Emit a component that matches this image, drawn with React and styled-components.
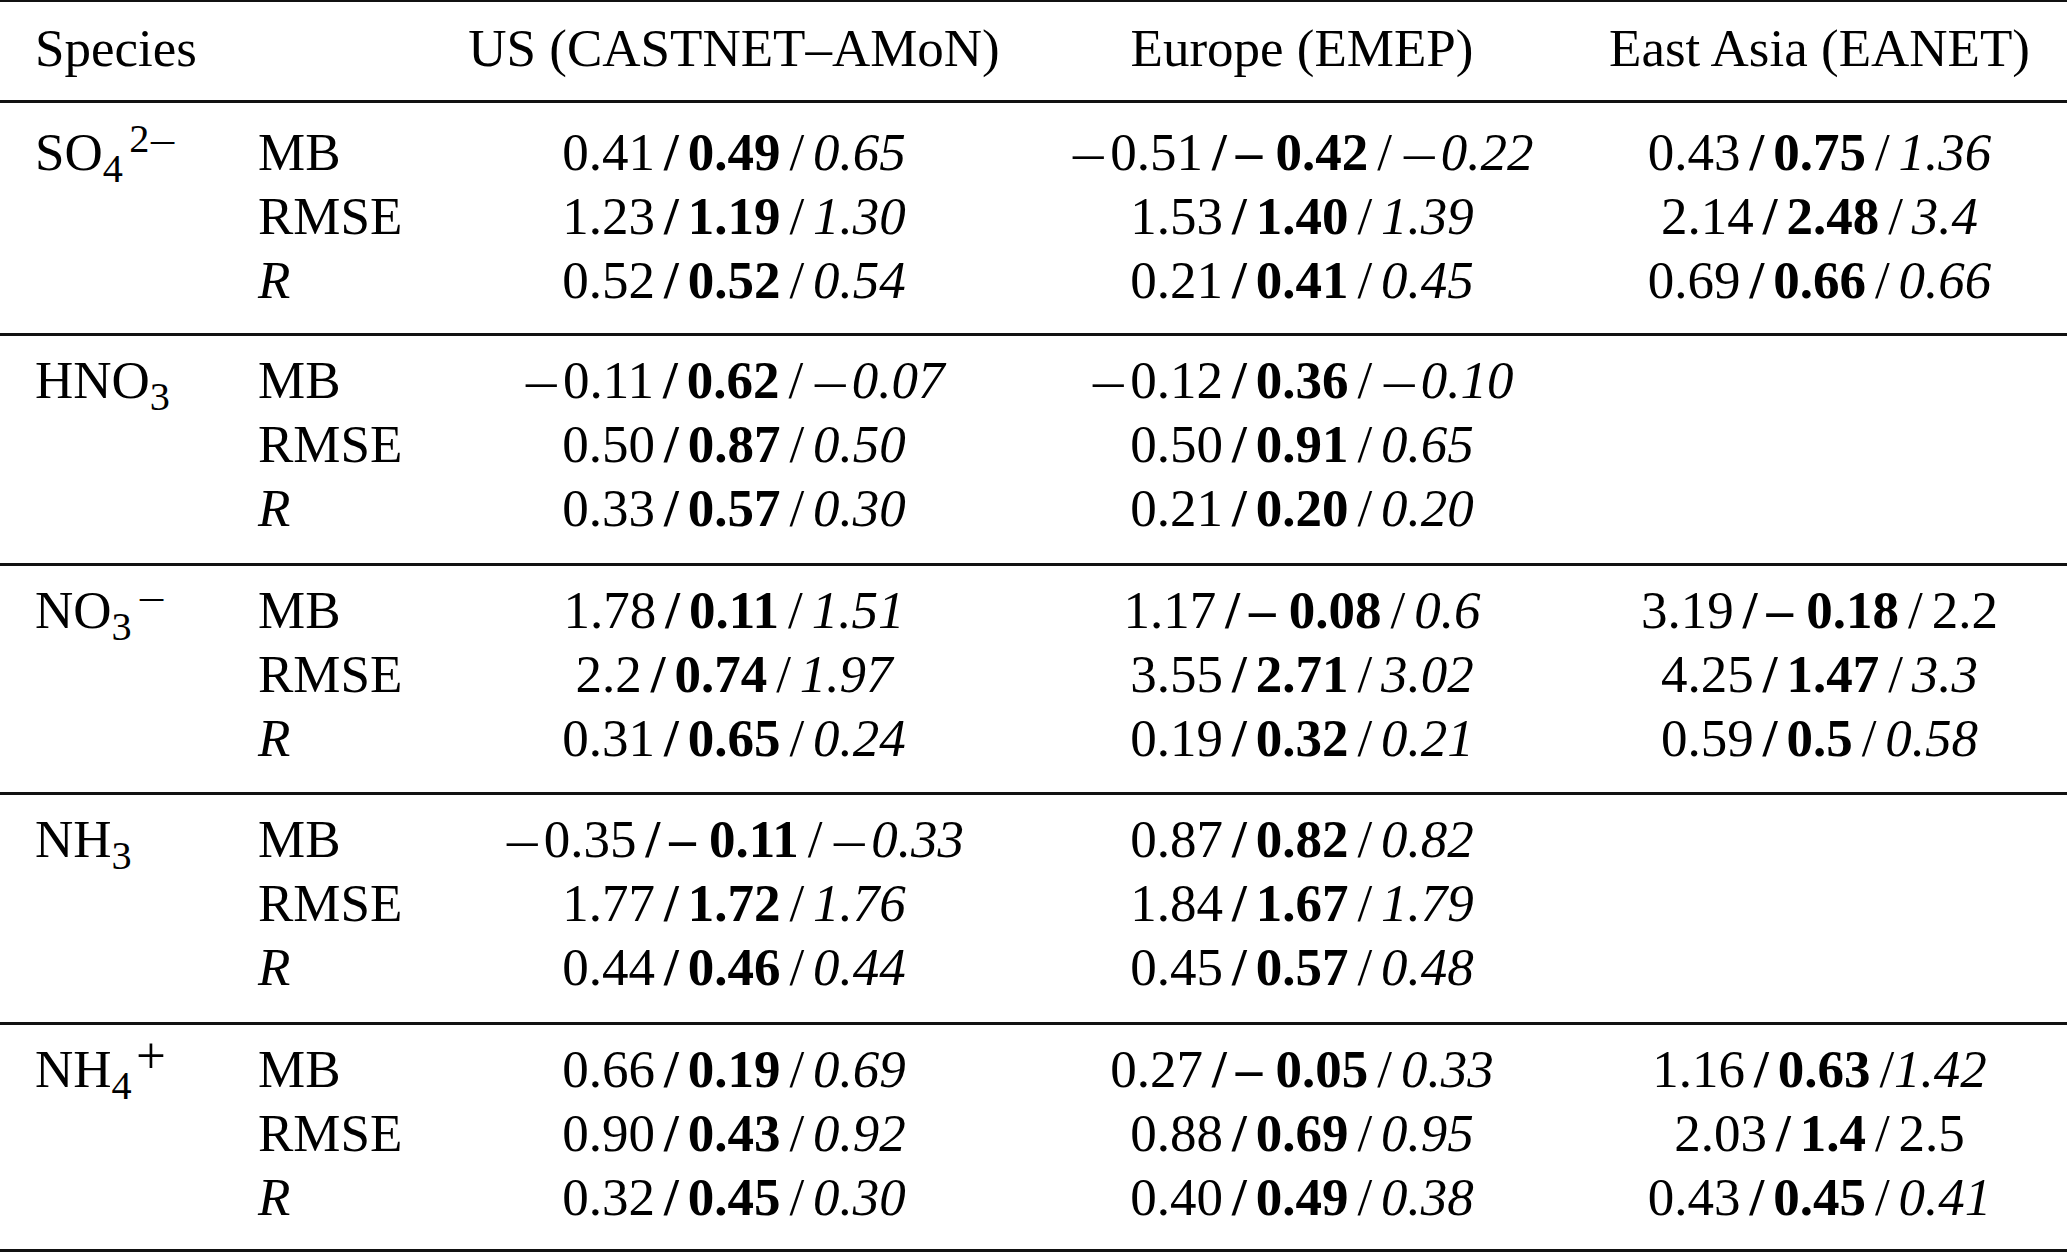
import styled, { createGlobalStyle } from 'styled-components';

const GlobalStyle = createGlobalStyle`
  html, body {
    margin: 0;
    padding: 0;
    background: #fff;
    overflow: hidden;
  }
  body {
    font-family: "Liberation Serif", "Times New Roman", serif;
    color: #000;
  }
`;

const COLUMNS = '223px 191px 570px 566px 469px';

const Table = styled.div`
  width: 2067px;
  font-size: 53px;
  line-height: 64px;
`;

const Header = styled.div`
  border-top: 2px solid #111;
  border-bottom: 3px solid #111;
  padding: 13.5px 0 20.5px;
`;

const Group = styled.div`
  border-bottom: 3px solid #111;
  padding-top: ${(p) => (p.$first ? '17px' : '12px')};
  padding-bottom: ${(p) => (p.$first ? '21px' : p.$last ? '20.5px' : '22.5px')};
`;

const Row = styled.div`
  display: grid;
  grid-template-columns: ${COLUMNS};
  padding: 0 13px 0 35px;
  height: 64px;
`;

const HeadCell = styled.div`
  text-align: ${(p) => (p.$center ? 'center' : 'left')};
  white-space: nowrap;
`;

const SpeciesCell = styled.div`
  white-space: nowrap;
`;

const Metric = styled.div`
  font-style: ${(p) => (p.$italic ? 'italic' : 'normal')};
  white-space: nowrap;
`;

const ValueCell = styled.div`
  text-align: center;
  white-space: nowrap;
`;

const Sub = styled.span`
  font-size: 0.76em;
  line-height: 0;
  vertical-align: -0.3em;
`;

const Sup = styled.span`
  font-size: ${(p) => (p.$sign ? '1em' : '0.76em')};
  line-height: 0;
  vertical-align: ${(p) => (p.$sign ? '0.26em' : '0.45em')};
  margin-left: ${(p) => (p.$sign ? '0.08em' : '0.16em')};
`;

const Minus = styled.span`
  display: inline-block;
  margin: 0 0.2em 0 0.05em;
  transform: scaleX(1.15);
  transform-origin: left center;
`;

const Slash = styled.span`
  font-weight: ${(p) => (p.$bold ? 700 : 400)};
  font-style: normal;
  margin: 0 ${(p) => (p.$tight ? '0' : '0.17em')} 0 0.17em;
`;

const Strong = styled.span`
  font-weight: 700;
`;

const Emph = styled.span`
  font-style: ${(p) => (p.$upright ? 'normal' : 'italic')};
`;

const v = (a, b, c, opts = {}) => ({ vals: [a, b, c], ...opts });

const groups = [
  {
    species: <>SO<Sub>4</Sub><Sup>2<Minus>–</Minus></Sup></>,
    rows: [
      ['MB', v('0.41', '0.49', '0.65'), v('-0.51', '-0.42', '-0.22'), v('0.43', '0.75', '1.36')],
      ['RMSE', v('1.23', '1.19', '1.30'), v('1.53', '1.40', '1.39'), v('2.14', '2.48', '3.4')],
      ['R', v('0.52', '0.52', '0.54'), v('0.21', '0.41', '0.45'), v('0.69', '0.66', '0.66')],
    ],
  },
  {
    species: <>HNO<Sub>3</Sub></>,
    rows: [
      ['MB', v('-0.11', '0.62', '-0.07'), v('-0.12', '0.36', '-0.10'), null],
      ['RMSE', v('0.50', '0.87', '0.50'), v('0.50', '0.91', '0.65'), null],
      ['R', v('0.33', '0.57', '0.30'), v('0.21', '0.20', '0.20'), null],
    ],
  },
  {
    species: <>NO<Sub>3</Sub><Sup><Minus>–</Minus></Sup></>,
    rows: [
      ['MB', v('1.78', '0.11', '1.51'), v('1.17', '-0.08', '0.6'), v('3.19', '-0.18', '2.2', { upright: true })],
      ['RMSE', v('2.2', '0.74', '1.97'), v('3.55', '2.71', '3.02'), v('4.25', '1.47', '3.3')],
      ['R', v('0.31', '0.65', '0.24'), v('0.19', '0.32', '0.21'), v('0.59', '0.5', '0.58')],
    ],
  },
  {
    species: <>NH<Sub>3</Sub></>,
    rows: [
      ['MB', v('-0.35', '-0.11', '-0.33'), v('0.87', '0.82', '0.82'), null],
      ['RMSE', v('1.77', '1.72', '1.76'), v('1.84', '1.67', '1.79'), null],
      ['R', v('0.44', '0.46', '0.44'), v('0.45', '0.57', '0.48'), null],
    ],
  },
  {
    species: <>NH<Sub>4</Sub><Sup $sign>+</Sup></>,
    rows: [
      ['MB', v('0.66', '0.19', '0.69'), v('0.27', '-0.05', '0.33'), v('1.16', '0.63', '1.42', { tight: true })],
      ['RMSE', v('0.90', '0.43', '0.92'), v('0.88', '0.69', '0.95'), v('2.03', '1.4', '2.5', { upright: true })],
      ['R', v('0.32', '0.45', '0.30'), v('0.40', '0.49', '0.38'), v('0.43', '0.45', '0.41')],
    ],
  },
];

// regular / italic numbers get a wide minus, like the typeset original
const Signed = ({ value }) =>
  value.startsWith('-') ? (
    <>
      <Minus>–</Minus>
      {value.slice(1)}
    </>
  ) : (
    value
  );

const Triple = ({ cell }) => {
  if (!cell) return <ValueCell />;
  const [a, b, c] = cell.vals;
  return (
    <ValueCell>
      <Signed value={a} />
      <Slash $bold>/</Slash>
      <Strong>{b.startsWith('-') ? `– ${b.slice(1)}` : b}</Strong>
      <Slash $tight={cell.tight}>/</Slash>
      <Emph $upright={cell.upright}>
        <Signed value={c} />
      </Emph>
    </ValueCell>
  );
};

export default function App() {
  return (
    <>
      <GlobalStyle />
      <Table>
        <Header>
          <Row>
            <HeadCell>Species</HeadCell>
            <HeadCell />
            <HeadCell $center>US (CASTNET–AMoN)</HeadCell>
            <HeadCell $center>Europe (EMEP)</HeadCell>
            <HeadCell $center>East Asia (EANET)</HeadCell>
          </Row>
        </Header>
        {groups.map((g, gi) => (
          <Group key={gi} $first={gi === 0} $last={gi === groups.length - 1}>
            {g.rows.map(([metric, us, eu, ea], ri) => (
              <Row key={metric}>
                <SpeciesCell>{ri === 0 ? g.species : null}</SpeciesCell>
                <Metric $italic={metric === 'R'}>{metric}</Metric>
                <Triple cell={us} />
                <Triple cell={eu} />
                <Triple cell={ea} />
              </Row>
            ))}
          </Group>
        ))}
      </Table>
    </>
  );
}
